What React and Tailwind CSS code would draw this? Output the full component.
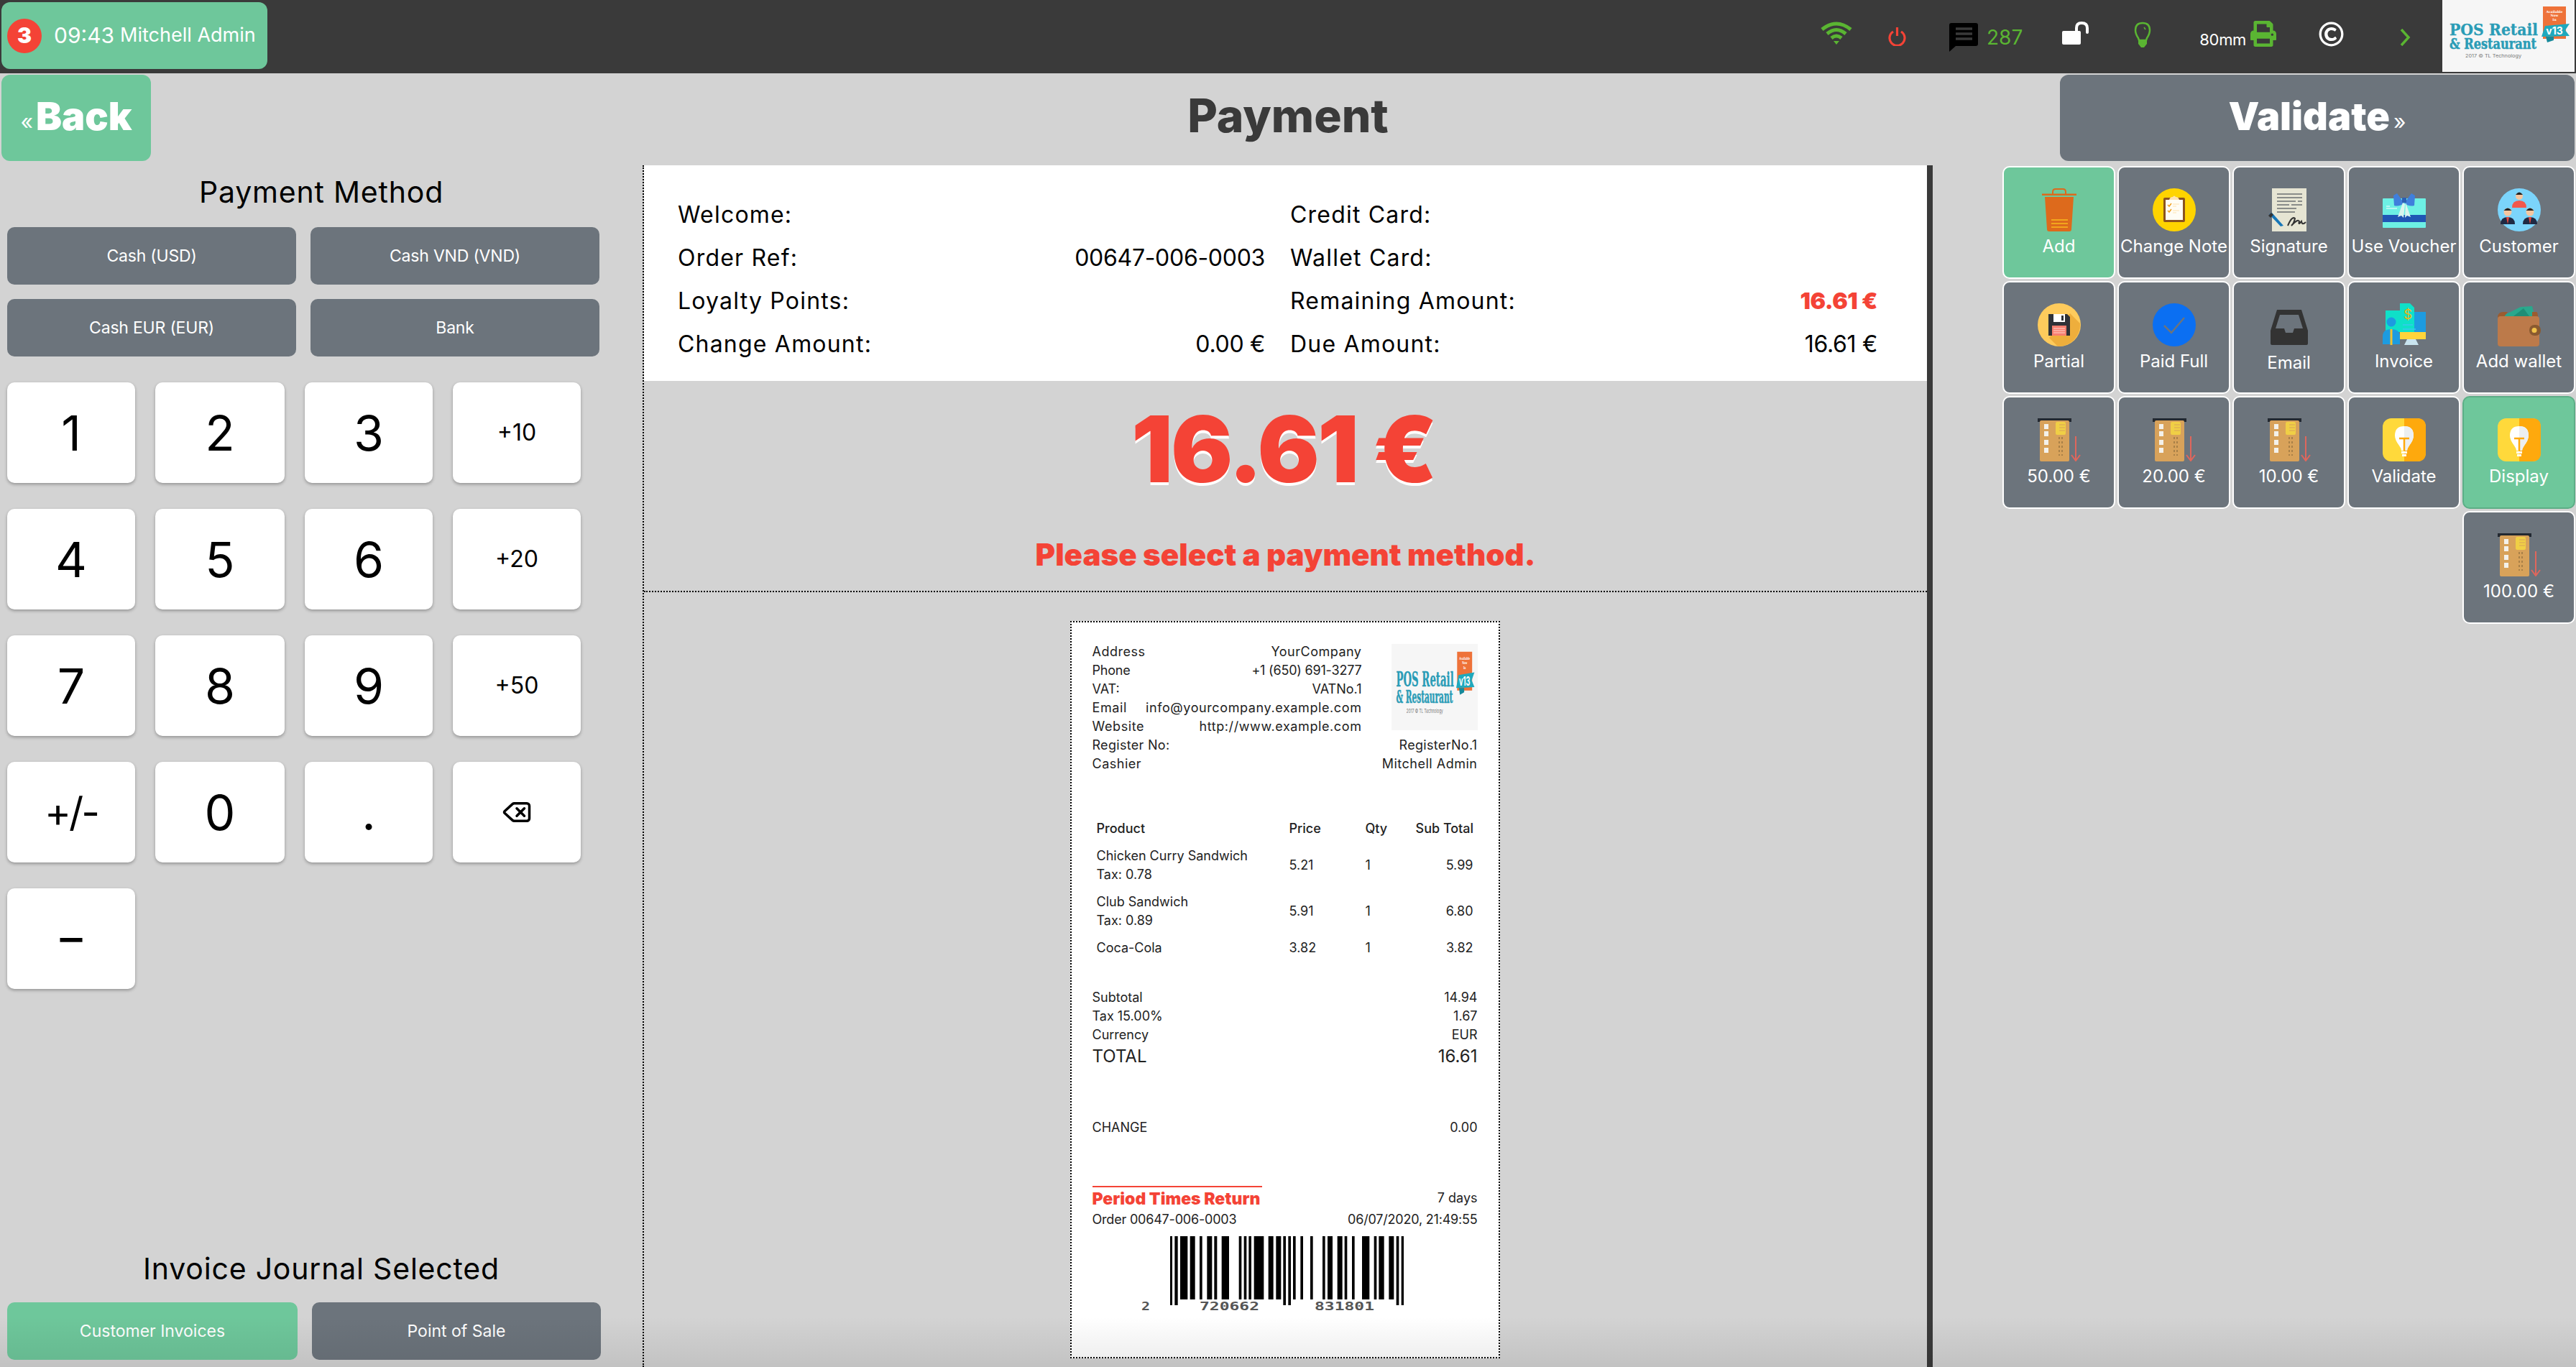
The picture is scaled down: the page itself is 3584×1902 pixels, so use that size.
import React from "react";
import { FaPrint, FaRegCopyright } from "react-icons/fa";
import { Delete } from "lucide-react";

const Logo = ({ className }) => (
  <svg viewBox="0 0 184 100" preserveAspectRatio="none" className={className}>
    <rect width="184" height="100" fill="#f6f6f6" />
    <rect x="140" y="9" width="32" height="45" fill="#ee7239" />
    <text x="156" y="18" fontSize="4.5" fontWeight="700" fill="#fff" textAnchor="middle" fontFamily="DejaVu Serif">Available</text>
    <text x="156" y="23" fontSize="4.5" fontWeight="700" fill="#fff" textAnchor="middle" fontFamily="DejaVu Serif">Now</text>
    <text x="156" y="29" fontSize="4.5" fontWeight="700" fill="#fff" textAnchor="middle" fontFamily="DejaVu Serif">In</text>
    <path d="M143 36 L177 33 L171 42 L177 50 L138 51 Z" fill="#1fa9bd" />
    <path d="M144 51 L155 51 L155 56 L146 59 Z" fill="#178a9b" />
    <text x="156" y="48" fontSize="14" fontWeight="700" fill="#fff" textAnchor="middle" fontFamily="Inter">v13</text>
    <text x="10" y="49" fontSize="23" fontWeight="700" fill="#2a9cb6" stroke="#2a9cb6" strokeWidth="0.3" fontFamily="DejaVu Serif" textLength="123" lengthAdjust="spacingAndGlyphs">POS Retail</text>
    <text x="10" y="68" fontSize="20" fontWeight="700" fill="#2a9cb6" stroke="#2a9cb6" strokeWidth="0.5" fontFamily="DejaVu Serif" textLength="121" lengthAdjust="spacingAndGlyphs">&amp; Restaurant</text>
    <text x="32" y="80" fontSize="6.5" fill="#777" fontFamily="Inter" textLength="78" lengthAdjust="spacingAndGlyphs">2017 © TL Technology</text>
  </svg>
);

const Trash = () => (
  <svg viewBox="0 0 60 60" className="w-[60px] h-[60px]">
    <path d="M21 9 V5 Q21 1 25 1 H35 Q39 1 39 5 V9" fill="none" stroke="#dd6a1c" strokeWidth="2" />
    <rect x="0" y="7.5" width="48" height="2.5" transform="translate(6 0)" fill="#dd6a1c" />
    <path d="M10 12 H50 L47 57 Q47 60 44 60 H16 Q13 60 13 57 Z" fill="#dd6a1c" />
    <path d="M19 44 H42 M19 49 H42 M19 54 H42" stroke="#f2a51c" strokeWidth="2" />
  </svg>
);
const Note = () => (
  <svg viewBox="0 0 60 60" className="w-[60px] h-[60px]">
    <circle cx="30" cy="30" r="30" fill="#ffd400" />
    <rect x="15" y="13" width="30" height="34" rx="2" fill="#8a5320" />
    <rect x="18" y="16" width="24" height="28" fill="#fffdf5" />
    <path d="M23 16 Q24 12 28 12 Q30 9 32 12 Q36 12 37 16 Z" fill="#ffe3b0" />
    <path d="M21 23 L23 25 L26 21 M21 31 L23 33 L26 29" stroke="#f0a020" strokeWidth="1.5" fill="none" />
    <path d="M28 22 H37 M28 25 H33 M28 31 H37 M28 34 H33" stroke="#ffe3b0" strokeWidth="1.2" />
  </svg>
);
const Signature = () => (
  <svg viewBox="0 0 60 60" className="w-[60px] h-[60px]">
    <rect x="6" y="0" width="48" height="60" fill="#e6e5d3" />
    <path d="M13 8 H48 M13 13 H48 M13 18 H39 M42 18 H48 M13 23 H30 M33 23 H48 M13 28 H40 M13 33 H38" stroke="#6b6f72" strokeWidth="1.6" />
    <path d="M2 36 L6 34 L22 52 L18 53 Z" fill="#1877b8" />
    <path d="M1 38 L5 34 L8 37 L4 41 Z" fill="#333" />
    <path d="M28 52 Q34 38 38 42 Q36 50 33 52 Q42 42 44 46 Q42 52 47 46 Q48 52 53 47" fill="none" stroke="#333" strokeWidth="2" />
  </svg>
);
const Voucher = () => (
  <svg viewBox="0 0 60 60" className="w-[60px] h-[60px]">
    <rect x="0" y="14" width="60" height="41" rx="1" fill="#6df0e4" />
    <rect x="0" y="37" width="60" height="10" fill="#1f56b4" />
    <path d="M5 25 H10 M5 28 H20" stroke="#fff" strokeWidth="1" />
    <path d="M28 18 L20 7 L15 10 L16 24 Q24 26 30 20 Q36 26 44 24 L45 10 L40 7 L32 18 Z" fill="#3f7fdc" />
    <rect x="27" y="13" width="6" height="7" fill="#2c5fb4" />
    <path d="M28 20 L21 40 L26 38 L29 41 L31 22 Z M32 20 L39 40 L34 38 L31 41 Z" fill="#d8f5ee" />
  </svg>
);
const Customer = () => (
  <svg viewBox="0 0 60 60" className="w-[60px] h-[60px]">
    <circle cx="30" cy="30" r="30" fill="#7bd4fb" />
    <circle cx="30" cy="11" r="5" fill="#f6c6a0" />
    <path d="M25 9 Q30 2 35 9 Z" fill="#222" />
    <path d="M20 27 Q20 17 30 17 Q40 17 40 27 Z" fill="#f2584c" />
    <circle cx="14" cy="33" r="5.5" fill="#f6c6a0" />
    <path d="M8.5 31 Q14 24 19.5 31 Z" fill="#222" />
    <path d="M4 50 Q4 40 14 40 Q24 40 24 50 Z" fill="#1f2a44" />
    <path d="M12 40 H16 L14 50 Z" fill="#e8473c" />
    <circle cx="45" cy="33" r="5.5" fill="#f6c6a0" />
    <path d="M39.5 31 Q45 24 50.5 31 Z" fill="#222" />
    <path d="M35 50 Q35 40 45 40 Q55 40 55 50 Z" fill="#1f2a44" />
    <path d="M43 40 H47 L45 50 Z" fill="#e8473c" />
  </svg>
);
const Partial = () => (
  <svg viewBox="0 0 60 60" className="w-[60px] h-[60px]">
    <circle cx="30" cy="30" r="30" fill="#fecb5c" />
    <path d="M45 14 L59 28 A30 30 0 0 1 28 60 L16 48 Z" fill="#eeae3c" />
    <path d="M15 15 H41 L45 19 V45 H15 Z" fill="#2f3238" />
    <rect x="22" y="15" width="16" height="11" fill="#fff" />
    <rect x="33" y="17" width="3" height="7" fill="#2f3238" />
    <rect x="20" y="31" width="20" height="14" fill="#f87e70" />
    <path d="M22 35 H38 M22 38 H38 M22 41 H38" stroke="#ffd9d0" strokeWidth="1" />
  </svg>
);
const Paid = () => (
  <svg viewBox="0 0 60 60" className="w-[60px] h-[60px]">
    <circle cx="30" cy="30" r="30" fill="#0b6ff2" />
    <path d="M16 31 L26 41 L44 20" fill="none" stroke="#6c747c" strokeWidth="2.5" />
  </svg>
);
const Inbox = () => (
  <svg viewBox="0 0 60 60" className="w-[60px] h-[60px]">
    <path d="M13 9 H47 L56 38 V56 Q56 58 54 58 H6 Q4 58 4 56 V38 Z" fill="#333" />
    <path d="M17 16 H43 L49 35 H37 L35 41 H25 L23 35 H11 Z" fill="#6c747c" />
  </svg>
);
const Invoice = () => (
  <svg viewBox="0 0 60 60" className="w-[60px] h-[60px]">
    <rect x="36" y="12" width="24" height="36" fill="#1d9be0" />
    <path d="M10 10 H24 V0 H38 L44 6 V40 H4 V10 Z" fill="#0fe0c8" />
    <rect x="24" y="40" width="36" height="10" fill="#ffd43a" />
    <path d="M34 50 H46 L50 58 H30 Z" fill="#c9e4ef" />
    <text x="29" y="22" fontSize="19" fill="#e8b518" fontFamily="Inter">$</text>
    <circle cx="12" cy="26" r="6.5" fill="#1d9be0" />
    <path d="M0 57 V46 Q0 36 12 36 Q24 36 24 46 V57 Z" fill="#1d9be0" />
    <path d="M12 36 V58" stroke="#f2c230" strokeWidth="3" />
    <path d="M28 30 H42 M28 36 H46" stroke="#38c8f0" strokeWidth="1.5" />
  </svg>
);
const Wallet = () => (
  <svg viewBox="0 0 60 60" className="w-[60px] h-[60px]">
    <path d="M6 18 L32 5 L48 4 L52 20 Z" fill="#2aa88d" />
    <path d="M22 18 L36 7 L44 18 Z" fill="#1e8e76" />
    <path d="M0 20 Q0 12 8 12 H14 L8 20 Z" fill="#9a5c30" />
    <path d="M48 12 H54 Q56 12 56 20 H48 Z" fill="#9a5c30" />
    <rect x="0" y="18" width="58" height="42" rx="4" fill="#bc7a4a" />
    <rect x="44" y="30" width="16" height="15" rx="7" fill="#8a5a30" />
    <circle cx="51" cy="37.5" r="3.5" fill="#f2c24a" />
  </svg>
);
const Card = () => (
  <svg viewBox="0 0 60 60" className="w-[60px] h-[60px]">
    <rect x="0" y="0" width="47" height="5" fill="#222830" />
    <rect x="3" y="3" width="41" height="57" rx="2" fill="#d8a25a" />
    <path d="M9 8 H15 V15 H9 Z M9 18 H15 V25 H9 Z M9 30 H15 V37 H9 Z M9 41 H15 V48 H9 Z" fill="#f3f1ea" />
    <rect x="25" y="5" width="14" height="18" rx="2" fill="#f0cf45" />
    <path d="M30 9 H38 M30 13 H38 M30 17 H38" stroke="#d8a25a" strokeWidth="1" />
    <path d="M30 26 V52 M34 26 V52" stroke="#8a6a3c" strokeWidth="1.2" strokeDasharray="3 3" />
    <path d="M53 25 V59 M47 51 L53 59 L59 51" fill="none" stroke="#e0665c" strokeWidth="2" />
  </svg>
);
const BulbTile = () => (
  <svg viewBox="0 0 60 60" className="w-[60px] h-[60px]">
    <rect width="60" height="60" rx="12" fill="#ffd93b" />
    <path d="M30 0 H48 Q60 0 60 12 V48 Q60 60 48 60 H30 Z" fill="#fea90d" />
    <path d="M30 11 Q17 11 17 24 Q17 30 23 38 Q26 42 26 45 H34 Q34 42 37 38 Q43 30 43 24 Q43 11 30 11 Z" fill="#fff" />
    <path d="M30 11 Q43 11 43 24 Q43 30 37 38 Q34 42 34 45 H30 Z" fill="#eceff1" />
    <path d="M23 28 H37 M30 28 V45" stroke="#fea90d" strokeWidth="2.5" />
    <rect x="26" y="46" width="8" height="3" fill="#fff" />
    <rect x="27" y="50" width="6" height="3" fill="#fff" />
  </svg>
);

const actions = [
  { label: "Add", icon: <Trash />, green: true },
  { label: "Change Note", icon: <Note /> },
  { label: "Signature", icon: <Signature /> },
  { label: "Use Voucher", icon: <Voucher /> },
  { label: "Customer", icon: <Customer /> },
  { label: "Partial", icon: <Partial /> },
  { label: "Paid Full", icon: <Paid /> },
  { label: "Email", icon: <Inbox />, low: true },
  { label: "Invoice", icon: <Invoice /> },
  { label: "Add wallet", icon: <Wallet /> },
  { label: "50.00 €", icon: <Card /> },
  { label: "20.00 €", icon: <Card /> },
  { label: "10.00 €", icon: <Card /> },
  { label: "Validate", icon: <BulbTile /> },
  { label: "Display", icon: <BulbTile />, green: true, ring: true },
  { label: "100.00 €", icon: <Card />, last: true },
];

const keys = ["1", "2", "3", "+10", "4", "5", "6", "+20", "7", "8", "9", "+50", "+/-", "0", ".", "del", "-"];

const bars = [
  [24, 33, 1], [43, 56, 1], [66, 97], [107, 128], [147, 158], [178, 199], [208, 220], [239, 270], [311, 322], [332, 343],
  [352, 363], [374, 415], [434, 455], [466, 487], [496, 507, 1], [517, 528, 1], [537, 548], [568, 579], [609, 620],
  [660, 671], [681, 702], [722, 743], [752, 763], [783, 794], [825, 856], [875, 886], [895, 917], [937, 958],
  [968, 979, 1], [989, 999, 1],
];

const Barcode = () => (
  <svg viewBox="0 0 380 120" className="w-[380px] h-[120px] ml-[60px] mt-[1px]">
    {bars.map(([a, b, long], i) => (
      <rect key={i} x={a / 3 + 40} y={9} width={(b - a) / 3} height={long ? 96 : 88} fill="#000" />
    ))}
    <g fontFamily="DejaVu Sans Mono" fontSize="15" fill="#555" fontWeight="700">
      <text x="8" y="112" textLength="12" lengthAdjust="spacingAndGlyphs">2</text>
      <text x="89" y="112" textLength="83" lengthAdjust="spacingAndGlyphs">720662</text>
      <text x="249" y="112" textLength="83" lengthAdjust="spacingAndGlyphs">831801</text>
    </g>
  </svg>
);

const Row = ({ a, b, className = "" }) => (
  <div className={`flex justify-between ${className}`}>
    <span>{a}</span>
    <span>{b}</span>
  </div>
);

const InfoRow = ({ a, b, red }) => (
  <div className="flex justify-between items-center h-[60px]">
    <span className="tracking-[1.2px]">{a}</span>
    <span className={red ? "text-[#f44336] font-black tracking-[-0.5px]" : "tracking-[-0.3px]"}>{b}</span>
  </div>
);

const Line = ({ name, tax, price, sub }) => (
  <>
    <div>
      <div>{name}</div>
      {tax && <div>{tax}</div>}
    </div>
    <div className="self-center">{price}</div>
    <div className="self-center">1</div>
    <div className="self-center text-right">{sub}</div>
  </>
);

export default function App() {
  return (
    <div className="relative w-[3584px] h-[1902px] overflow-hidden flex flex-col bg-[#d3d3d3] text-black font-[Inter,sans-serif]">
      <header className="h-[102px] shrink-0 bg-[#3a3a3a] flex items-start">
        <div className="mt-[3px] ml-[2px] w-[370px] h-[93px] rounded-[12px] bg-[#6ec79b] flex items-center text-white pl-[8px]">
          <span className="w-[48px] h-[48px] rounded-full bg-[#f44336] flex items-center justify-center text-[30px] font-black">3</span>
          <span className="ml-[17px] text-[30px]">09:43</span>
          <span className="ml-[8px] text-[27px]">Mitchell Admin</span>
        </div>
        <svg viewBox="0 0 44 32" className="ml-[2161px] mt-[30px] w-[44px] h-[32px]">
          <g fill="none" stroke="#5ab532" strokeWidth="5">
            <path d="M2 11 Q22 -5 42 11" />
            <path d="M9 17 Q22 6 35 17" />
            <path d="M15 23 Q22 17 29 23" />
          </g>
          <path d="M18 27 L26 27 L22 32 Z" fill="#5ab532" />
        </svg>
        <svg viewBox="0 0 25 26" className="ml-[50px] mt-[38px] w-[25px] h-[26px]">
          <path d="M7 6 A10.5 10.5 0 1 0 18 6" fill="none" stroke="#f44336" strokeWidth="3.2" />
          <path d="M12.5 0 V12" stroke="#f44336" strokeWidth="3.2" />
        </svg>
        <svg viewBox="0 0 40 40" className="ml-[60px] mt-[32px] w-[40px] h-[40px]">
          <path d="M3 0 H37 Q40 0 40 3 H40 V29 Q40 32 37 32 H9 L0 40 V3 Q0 0 3 0 Z" fill="#000" />
          <path d="M9 8 H32 M9 15 H32 M9 22 H32" stroke="#3a3a3a" strokeWidth="3.5" />
        </svg>
        <span className="ml-[12px] mt-[35px] text-[28px] leading-[34px] text-[#5ab532]">287</span>
        <svg viewBox="0 0 38 32" className="ml-[55px] mt-[30px] w-[38px] h-[32px]">
          <rect x="0" y="13" width="26" height="19" rx="2" fill="#fff" />
          <path d="M20 14 V9 Q20 2 27 2 Q35 2 35 9 V15" fill="none" stroke="#fff" strokeWidth="4" strokeLinecap="round" />
        </svg>
        <svg viewBox="0 0 24 36" className="ml-[62px] mt-[30px] w-[24px] h-[36px]">
          <path d="M12 2 Q2 2 2 12 Q2 17 6 23 L7 26 H17 L18 23 Q22 17 22 12 Q22 2 12 2 Z" fill="none" stroke="#5ab532" strokeWidth="2.5" />
          <path d="M6 25 H18 V31 L14 36 H10 L6 31 Z" fill="#5ab532" />
          <path d="M14 8 L16 11" stroke="#5ab532" strokeWidth="1.5" />
        </svg>
        <span className="ml-[67px] mt-[38px] text-[22px] leading-[34px] text-white tracking-[-0.3px]">80mm</span>
        <FaPrint className="ml-[5px] mt-[29px] text-[#5ab532] w-[38px] h-[36px]" />
        <FaRegCopyright className="ml-[58px] mt-[30px] text-white w-[35px] h-[35px]" />
        <svg viewBox="0 0 16 24" className="ml-[77px] mt-[40px] w-[16px] h-[24px]">
          <path d="M3 1 L13 12 L3 23" fill="none" stroke="#5ab532" strokeWidth="3.5" />
        </svg>
        <Logo className="ml-[44px] w-[184px] h-[100px]" />
      </header>

      <div className="h-[120px] mt-[2px] shrink-0 flex">
        <div className="w-[718px] pl-[2px]">
          <button className="w-[208px] h-full rounded-[12px] bg-[#6ec79b] text-white flex items-center justify-center pb-[6px]">
            <span className="text-[30px] leading-none mt-[16px] mr-[4px]">«</span>
            <span className="text-[54px] font-black">Back</span>
          </button>
        </div>
        <div className="flex-1 flex items-center justify-center text-[64px] font-extrabold text-[#3a3a3a] pb-[6px]">Payment</div>
        <div className="w-[718px] pr-[2px]">
          <button className="w-full h-full rounded-[12px] bg-[#6c747c] text-white flex items-center justify-center pb-[6px]">
            <span className="text-[54px] font-black">Validate</span>
            <span className="text-[30px] leading-none mt-[16px] ml-[5px]">»</span>
          </button>
        </div>
      </div>

      <main className="flex-1 min-h-0 mt-[6px] flex">
        <section className="w-[894px] shrink-0 flex flex-col pl-[10px] pb-[10px]">
          <h2 className="h-[76px] -ml-[10px] flex items-center justify-center text-[41px] tracking-[0.8px]">Payment Method</h2>
          <div className="mt-[10px] grid grid-cols-[402px_402px] gap-x-[20px] gap-y-[20px]">
            {["Cash (USD)", "Cash VND (VND)", "Cash EUR (EUR)", "Bank"].map((t) => (
              <button key={t} className="h-[80px] rounded-[10px] bg-[#6c747c] text-white text-[23px] tracking-[-0.2px]">{t}</button>
            ))}
          </div>
          <div className="mt-[36px] grid grid-cols-[178px_180px_178px_178px] gap-x-[28px] gap-y-[36px]">
            {keys.map((k) => {
              const small = k.startsWith("+") && k !== "+/-";
              const size = small ? "text-[32px]" : k === "+/-" ? "text-[56px] tracking-[-3px]" : "text-[68px]";
              return (
                <button
                  key={k}
                  className={`h-[140px] rounded-[10px] bg-white shadow-[0_2px_4px_rgba(0,0,0,0.3)] flex items-center justify-center ${size} ${k === "-" ? "pb-[8px]" : ""}`}
                >
                  {k === "del" ? <Delete size={42} strokeWidth={2} /> : k === "-" ? "−" : k}
                </button>
              );
            })}
          </div>
          <h2 className="mt-auto h-[72px] -ml-[10px] mb-[2px] flex items-center justify-center text-[41px] tracking-[0.8px]">Invoice Journal Selected</h2>
          <div className="mt-[8px] grid grid-cols-[404px_402px] gap-x-[20px]">
            <button className="h-[80px] rounded-[10px] bg-[#6ec79b] text-white text-[23px]">Customer Invoices</button>
            <button className="h-[80px] rounded-[10px] bg-[#6c747c] text-white text-[23px]">Point of Sale</button>
          </div>
        </section>

        <section className="w-[1795px] shrink-0 flex border-l-2 border-dotted border-black">
          <div className="flex-1 min-w-0 flex flex-col">
            <div className="h-[300px] shrink-0 bg-white grid grid-cols-[817px_817px] gap-x-[35px] pl-[47px] pt-[39px] text-[32px]">
              <div>
                <InfoRow a="Welcome:" />
                <InfoRow a="Order Ref:" b="00647-006-0003" />
                <InfoRow a="Loyalty Points:" />
                <InfoRow a="Change Amount:" b="0.00 €" />
              </div>
              <div>
                <InfoRow a="Credit Card:" />
                <InfoRow a="Wallet Card:" />
                <InfoRow a="Remaining Amount:" b="16.61 €" red />
                <InfoRow a="Due Amount:" b="16.61 €" />
              </div>
            </div>
            <div className="h-[294px] shrink-0 border-b-2 border-dotted border-black text-[#f44336] font-black text-center">
              <div className="mt-[27px] h-[136px] text-[128px] leading-[136px] tracking-[-3px] [text-shadow:0_4px_0_#fff] pr-[6px]">16.61 €</div>
              <div className="mt-[55px] text-[42px] leading-[48px]">Please select a payment method.</div>
            </div>
            <div className="flex-1 flex justify-center pt-[40px]">
              <div className="w-[598px] h-[1026px] shrink-0 -translate-x-[1px] bg-white border-2 border-dotted border-black pt-[28px] px-[29px] text-[18px] leading-[26px] text-[#222]">
                <div className="flex gap-[41px]">
                  <div className="w-[375px]">
                    <Row a="Address" b="YourCompany" className="tracking-[0.5px]" />
                    <Row a="Phone" b="+1 (650) 691-3277" className="tracking-[-0.2px]" />
                    <Row a="VAT:" b="VATNo.1" />
                    <Row a="Email" b="info@yourcompany.example.com" className="tracking-[0.6px]" />
                    <Row a="Website" b="http://www.example.com" className="tracking-[0.6px]" />
                  </div>
                  <Logo className="w-[120px] h-[120px] mt-[2px]" />
                </div>
                <Row a="Register No:" b="RegisterNo.1" className="tracking-[0.3px]" />
                <Row a="Cashier" b="Mitchell Admin" className="tracking-[0.5px]" />

                <div className="mt-[64px] ml-[6px] grid grid-cols-[268px_106px_70px_80px] gap-y-[12px]">
                  <div className="font-medium">Product</div>
                  <div className="font-medium">Price</div>
                  <div className="font-medium">Qty</div>
                  <div className="font-medium text-right whitespace-nowrap">Sub Total</div>
                  <Line name="Chicken Curry Sandwich" tax="Tax: 0.78" price="5.21" sub="5.99" />
                  <Line name="Club Sandwich" tax="Tax: 0.89" price="5.91" sub="6.80" />
                  <Line name="Coca-Cola" price="3.82" sub="3.82" />
                </div>

                <div className="mt-[43px]">
                  <Row a="Subtotal" b="14.94" />
                  <Row a="Tax 15.00%" b="1.67" />
                  <Row a="Currency" b="EUR" />
                  <Row a="TOTAL" b="16.61" className="text-[24px] leading-[32px] mt-[1px]" />
                  <Row a="CHANGE" b="0.00" className="mt-[70px]" />
                </div>

                <div className="mt-[68px] flex justify-between items-start">
                  <span className="w-[236px] border-t-2 border-[#f44336] text-[#f44336] font-black text-[23px] leading-[32px] whitespace-nowrap">Period Times Return</span>
                  <span className="mt-[4px]">7 days</span>
                </div>
                <Row a="Order 00647-006-0003" b="06/07/2020, 21:49:55" className="tracking-[-0.2px]" />
                <Barcode />
              </div>
            </div>
          </div>
          <div className="w-[8px] shrink-0 bg-[#3a3a3a]" />
        </section>

        <section className="flex-1 min-w-0 pl-[97px] pt-[1px]">
          <div className="grid grid-cols-[repeat(5,157px)] auto-rows-[157px] gap-[3px]">
            {actions.map((a) => (
              <div
                key={a.label}
                className={`rounded-[10px] border-2 flex flex-col items-center pt-[29px] text-white text-[24px] leading-[34px] ${a.green ? "bg-[#6ec79b]" : "bg-[#6c747c]"} ${a.ring ? "border-[#5cae86]" : "border-white"} ${a.last ? "col-start-5" : ""}`}
              >
                {a.icon}
                <span className={`${a.low ? "mt-[6px]" : "mt-[4px]"} whitespace-nowrap`}>{a.label}</span>
              </div>
            ))}
          </div>
        </section>
      </main>

      <div className="absolute inset-x-0 bottom-0 h-[70px] pointer-events-none bg-linear-to-b from-transparent to-black/[0.08]" />
    </div>
  );
}
